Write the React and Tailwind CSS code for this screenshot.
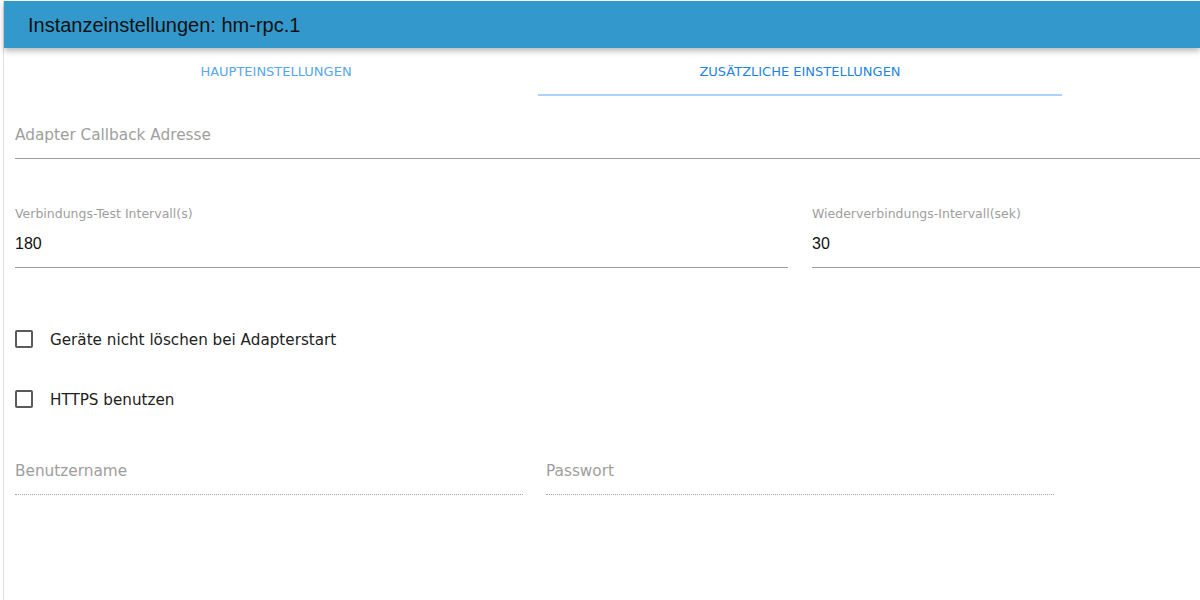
import React from 'react';

const body = { fontFamily: '"DejaVu Sans", "Liberation Sans", sans-serif' };
const arial = { fontFamily: '"Liberation Sans", Arial, sans-serif' };

function Checkbox({ label }) {
  return (
    <label className="flex items-center h-[24px] cursor-pointer">
      <span className="w-[18px] h-[18px] border-2 border-[#5a5a5a] rounded-[2px] shrink-0" />
      <span className="ml-[17px] pt-[2px] text-[15.2px] text-[#222]" style={body}>{label}</span>
    </label>
  );
}

export default function App() {
  return (
    <div className="min-h-[600px] bg-white pt-px">
      <div className="ml-[3px] min-h-[599px] border-l border-[#e2e2e2]">
        {/* title bar */}
        <div
          className="h-[47px] bg-[#3399cc] flex items-center pl-[24px] shadow-[0_3px_6px_rgba(0,0,0,0.28)] text-[20px] text-[#111]"
          style={arial}
        >
          Instanzeinstellungen: hm-rpc.1
        </div>

        {/* tabs */}
        <div className="flex ml-[10px] w-[1048px] h-[48px]" style={body}>
          <div className="flex-1 flex items-center justify-center text-[13px] text-[#57a7ea]">
            HAUPTEINSTELLUNGEN
          </div>
          <div className="flex-1 flex items-center justify-center pt-[2px] text-[13px] text-[#1f84dd] border-b-2 border-[#a7d5fb]">
            ZUSÄTZLICHE EINSTELLUNGEN
          </div>
        </div>

        <div className="pl-[11px]">
          {/* callback address */}
          <div className="mt-[14px] h-[49px] pt-[2px] flex items-center border-b border-[#9e9e9e] text-[15.3px] text-[#9e9e9e]" style={body}>
            Adapter Callback Adresse
          </div>

          {/* intervals */}
          <div className="mt-[47px] flex gap-[24px]">
            <div className="w-[773px]">
              <div className="text-[12.5px] leading-[16px] text-[#9e9e9e]" style={body}>Verbindungs-Test Intervall(s)</div>
              <div className="mt-[12px] pb-[13px] text-[16px] leading-[20px] text-[#111] border-b border-[#9e9e9e]" style={arial}>180</div>
            </div>
            <div className="flex-1">
              <div className="text-[12.5px] leading-[16px] text-[#9e9e9e]" style={body}>Wiederverbindungs-Intervall(sek)</div>
              <div className="mt-[12px] pb-[13px] text-[16px] leading-[20px] text-[#111] border-b border-[#9e9e9e]" style={arial}>30</div>
            </div>
          </div>

          {/* checkboxes */}
          <div className="mt-[59px] flex flex-col gap-[36px]">
            <Checkbox label="Geräte nicht löschen bei Adapterstart" />
            <Checkbox label="HTTPS benutzen" />
          </div>

          {/* credentials */}
          <div className="mt-[46px] flex gap-[23px]">
            <div className="w-[508px] h-[38px] pt-px border-b border-dotted border-[#a8a8a8]">
              <span className="text-[15.3px] leading-[24px] text-[#9e9e9e]" style={body}>Benutzername</span>
            </div>
            <div className="w-[508px] h-[38px] pt-px border-b border-dotted border-[#a8a8a8]">
              <span className="text-[15.3px] leading-[24px] text-[#9e9e9e]" style={body}>Passwort</span>
            </div>
          </div>
        </div>
      </div>
    </div>
  );
}
